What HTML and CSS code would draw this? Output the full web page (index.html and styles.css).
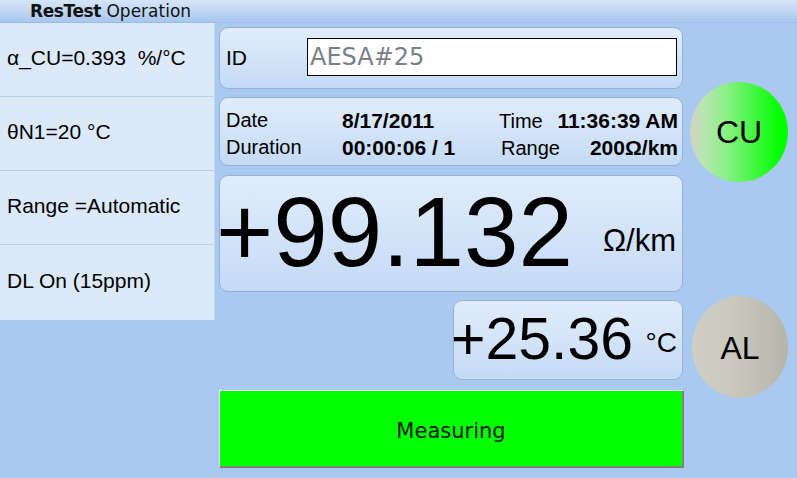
FILE: index.html
```html
<!DOCTYPE html>
<html lang="en">
<head>
<meta charset="utf-8">
<title>ResTest Operation</title>
<link rel="stylesheet" href="styles.css">
</head>
<body>
<div class="titlebar"><b>ResTest</b> Operation</div>
<div class="screen">
  <aside class="settings">
    <div class="setting">α_CU=0.393&nbsp;&nbsp;%/°C</div>
    <div class="setting">θN1=20 °C</div>
    <div class="setting">Range =Automatic</div>
    <div class="setting">DL On (15ppm)</div>
  </aside>
  <main class="main">
    <div class="card id-card">
      <span class="id-label">ID</span>
      <div class="id-input">AESA#25</div>
    </div>
    <div class="card info-card">
      <span>Date</span><b>8/17/2011</b>
      <div class="pair"><span>Time</span><b>11:36:39 AM</b></div>
      <span>Duration</span><b>00:00:06 / 1</b>
      <div class="pair pair2"><span>Range</span><b>200Ω/km</b></div>
    </div>
    <div class="card big-card">
      <span class="big-num">+99.132</span>
      <span class="big-unit">Ω/km</span>
    </div>
    <div class="temp-row">
      <div class="card temp-card">
        <span class="temp-num">+25.36</span>
        <span class="temp-unit">°C</span>
      </div>
    </div>
    <div class="status">Measuring</div>
  </main>
  <div class="side">
    <div class="lamp lamp-cu">CU</div>
    <div class="lamp lamp-al">AL</div>
  </div>
</div>
</body>
</html>
```
FILE: styles.css
```css
html, body {
  margin: 0;
  padding: 0;
}
body {
  width: 797px;
  height: 478px;
  overflow: hidden;
  background: #a9c9ef;
  font-family: "Liberation Sans", Arial, sans-serif;
  color: #000;
}
.titlebar {
  height: 22px;
  line-height: 23px;
  border-bottom: 1px solid #9bbbe4;
  background: linear-gradient(#d6e5f8, #c2d8f4 45%, #a6c6ee);
  padding-left: 30px;
  font-family: "DejaVu Sans", sans-serif;
  font-size: 17px;
  color: #111;
}
.titlebar b {
  font-weight: bold;
  letter-spacing: -0.4px;
}
.screen {
  display: flex;
  align-items: flex-start;
}
.settings {
  width: 214px;
  border-right: 1px solid #c6d8ef;
  background: #dce9f9;
  display: flex;
  flex-direction: column;
}
.setting {
  border-bottom: 1px solid #b8cfeb;
  display: flex;
  align-items: center;
  padding-left: 7px;
  padding-bottom: 4px;
  box-sizing: border-box;
  height: 74px;
  font-size: 21px;
}
.setting:last-child {
  height: 75px;
  border-bottom: none;
}
.main {
  margin-left: 4px;
  width: 465px;
  padding-top: 4px;
  display: flex;
  flex-direction: column;
}
.card {
  box-sizing: border-box;
  width: 464px;
  border: 1px solid #93b1da;
  border-radius: 9px;
  background: linear-gradient(#e0ecfb, #d3e4f9 50%, #c4daf5);
}
.id-card {
  height: 62px;
  display: flex;
  align-items: center;
  padding-left: 6px;
}
.id-label {
  width: 81px;
  font-size: 21px;
}
.id-input {
  box-sizing: border-box;
  width: 370px;
  height: 38px;
  margin-bottom: 2px;
  background: #fff;
  border: 1px solid #000;
  padding-left: 2px;
  font-family: "DejaVu Sans", sans-serif;
  font-size: 24px;
  line-height: 36px;
  color: #7a8089;
}
.info-card {
  margin-top: 8px;
  height: 69px;
  padding: 9px 4px 0 6px;
  display: grid;
  grid-template-columns: 116px 157px 1fr;
  grid-auto-rows: 27px;
  align-items: center;
  font-size: 20px;
  white-space: nowrap;
}
.info-card b {
  font-weight: bold;
  font-size: 21px;
}
.pair {
  display: flex;
  justify-content: space-between;
  align-items: baseline;
}
.pair2 {
  padding-left: 2px;
}
.big-card {
  margin-top: 9px;
  height: 117px;
  display: flex;
  align-items: flex-start;
  justify-content: space-between;
  padding: 7px 6px 0 0;
}
.big-num {
  font-size: 98px;
  line-height: 98px;
  margin-left: -4px;
}
.big-unit {
  font-size: 31px;
  line-height: 31px;
  margin-top: 42px;
}
.temp-row {
  margin-top: 8px;
  height: 80px;
  display: flex;
  justify-content: flex-end;
  width: 464px;
}
.temp-card {
  width: 230px;
  height: 80px;
  display: flex;
  align-items: flex-start;
  justify-content: space-between;
  padding: 9px 5px 0 0;
}
.temp-num {
  font-size: 59px;
  line-height: 59px;
  margin-left: -3px;
}
.temp-unit {
  font-size: 28px;
  line-height: 28px;
  margin-top: 19px;
}
.status {
  margin-top: 10px;
  box-sizing: border-box;
  width: 465px;
  height: 78px;
  padding-top: 5px;
  background: #00ff00;
  border-top: 1px solid #ffffff;
  border-left: 1px solid #ffffff;
  border-right: 2px solid #808080;
  border-bottom: 2px solid #808080;
  display: flex;
  align-items: center;
  justify-content: center;
  font-family: "DejaVu Sans", sans-serif;
  font-size: 21px;
  color: #101810;
}
.side {
  padding-top: 59px;
  display: flex;
  flex-direction: column;
}
.lamp {
  border-radius: 50%;
  display: flex;
  align-items: center;
  justify-content: center;
  font-size: 32px;
}
.lamp-cu {
  margin-left: 6px;
  width: 98px;
  height: 100px;
  background: linear-gradient(to right, #d3d2c6 0%, #b9e6b0 14%, #8ef08a 35%, #4cf64a 62%, #00ff00 92%);
}
.lamp-al {
  margin-left: 8px;
  margin-top: 114px;
  width: 96px;
  height: 102px;
  padding-top: 2px;
  box-sizing: border-box;
  background: linear-gradient(to right, #cfcfc4 0%, #c9c9be 40%, #bcbcb2 80%, #b4b4ac 100%);
}
```
